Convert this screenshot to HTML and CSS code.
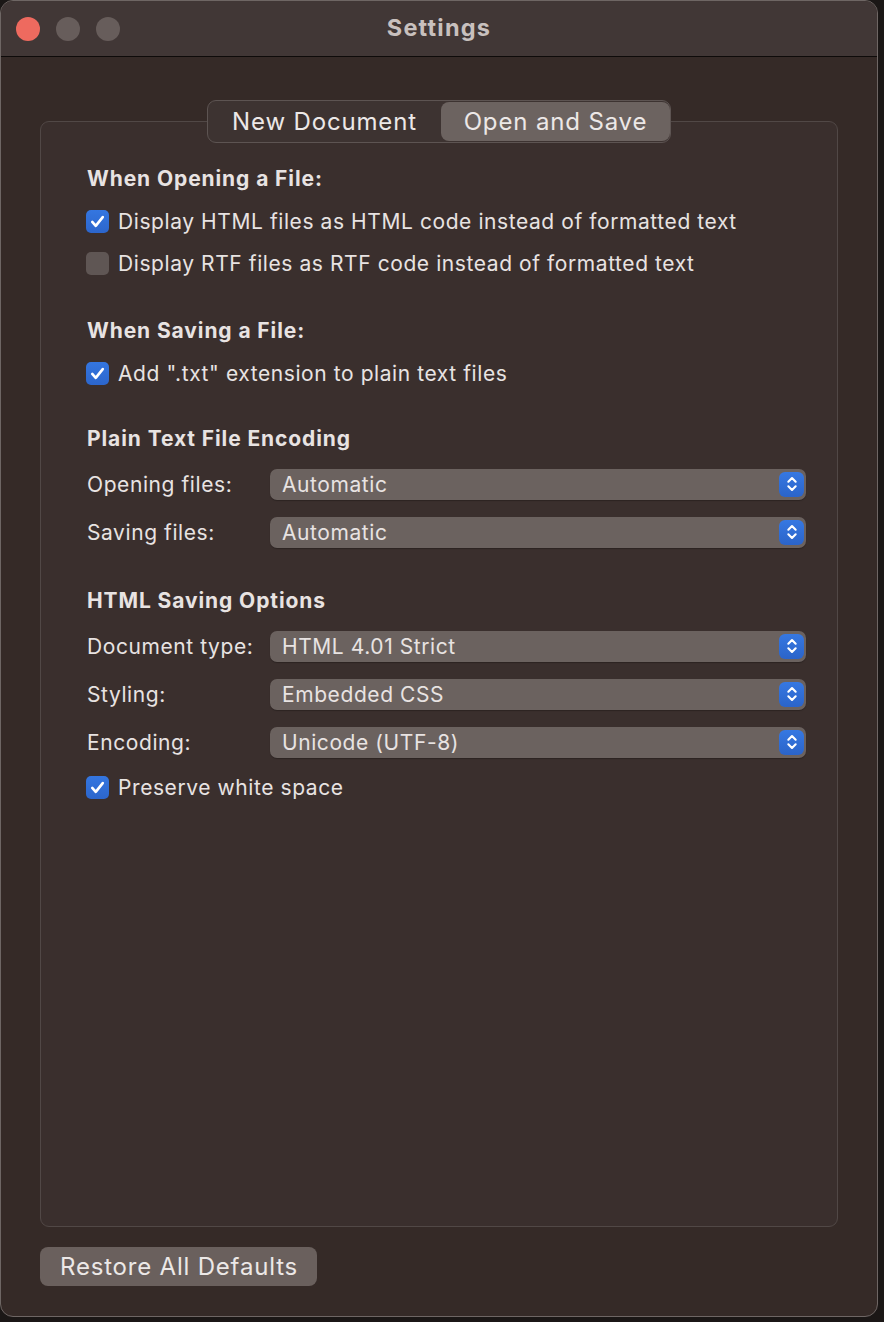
FILE: index.html
```html
<!DOCTYPE html>
<html>
<head>
<meta charset="utf-8">
<link rel="stylesheet" href="styles.css">
</head>
<body>
<div class="window">
  <div class="titlebar">
    <div class="lights">
      <span class="light red"></span>
      <span class="light gray"></span>
      <span class="light gray"></span>
    </div>
    <div class="title">Settings</div>
  </div>
  <div class="content">
    <div class="tabs">
      <div class="tab">New Document</div>
      <div class="tab selected">Open and Save</div>
    </div>
    <div class="box">
      <div class="heading">When Opening a File:</div>
      <div class="cbrow"><span class="cb on"><svg viewBox="0 0 24 24"><path d="M6 12.5l4 4.5 8-10" /></svg></span><span>Display HTML files as HTML code instead of formatted text</span></div>
      <div class="cbrow"><span class="cb"></span><span>Display RTF files as RTF code instead of formatted text</span></div>

      <div class="heading section">When Saving a File:</div>
      <div class="cbrow"><span class="cb on"><svg viewBox="0 0 24 24"><path d="M6 12.5l4 4.5 8-10" /></svg></span><span>Add ".txt" extension to plain text files</span></div>

      <div class="heading section tight">Plain Text File Encoding</div>
      <div class="selrow"><span class="label">Opening files:</span><div class="select"><span>Automatic</span><span class="stepper"><svg viewBox="0 0 24 24"><path d="M8 9.5l4-4 4 4M8 14.5l4 4 4-4"/></svg></span></div></div>
      <div class="selrow"><span class="label">Saving files:</span><div class="select"><span>Automatic</span><span class="stepper"><svg viewBox="0 0 24 24"><path d="M8 9.5l4-4 4 4M8 14.5l4 4 4-4"/></svg></span></div></div>

      <div class="heading section tight">HTML Saving Options</div>
      <div class="selrow"><span class="label">Document type:</span><div class="select"><span>HTML 4.01 Strict</span><span class="stepper"><svg viewBox="0 0 24 24"><path d="M8 9.5l4-4 4 4M8 14.5l4 4 4-4"/></svg></span></div></div>
      <div class="selrow"><span class="label">Styling:</span><div class="select"><span>Embedded CSS</span><span class="stepper"><svg viewBox="0 0 24 24"><path d="M8 9.5l4-4 4 4M8 14.5l4 4 4-4"/></svg></span></div></div>
      <div class="selrow"><span class="label">Encoding:</span><div class="select"><span>Unicode (UTF-8)</span><span class="stepper"><svg viewBox="0 0 24 24"><path d="M8 9.5l4-4 4 4M8 14.5l4 4 4-4"/></svg></span></div></div>
      <div class="cbrow"><span class="cb on"><svg viewBox="0 0 24 24"><path d="M6 12.5l4 4.5 8-10" /></svg></span><span>Preserve white space</span></div>
    </div>
    <div class="footer">
      <button class="restore">Restore All Defaults</button>
    </div>
  </div>
</div>
</body>
</html>
```

FILE: styles.css
```css
html, body {
  margin: 0;
  padding: 0;
}
body {
  width: 884px;
  height: 1322px;
  background: #1b1716;
  font-family: Inter, "Open Sans", "Liberation Sans", sans-serif;
  color: #e8e3e2;
  overflow: hidden;
}
.window {
  width: 876px;
  height: 1315px;
  border: 1px solid #6e6664;
  border-radius: 13px;
  background: #352a27;
  overflow: hidden;
  display: flex;
  flex-direction: column;
}
.titlebar {
  height: 55px;
  background: #413736;
  border-bottom: 1px solid #0e0b0a;
  display: flex;
  align-items: center;
  position: relative;
}
.lights {
  display: flex;
  gap: 16px;
  padding-left: 15px;
}
.light {
  width: 24px;
  height: 24px;
  border-radius: 50%;
  display: block;
}
.light.red { background: #ee6a5f; }
.light.gray { background: #675d5b; }
.title {
  position: absolute;
  left: 0;
  right: 0;
  top: 0;
  bottom: 3px;
  display: flex;
  align-items: center;
  justify-content: center;
  font-weight: 700;
  font-size: 23.5px;
  letter-spacing: 1.2px;
  color: #c8c0be;
}
.content {
  flex: 1;
  display: flex;
  flex-direction: column;
  padding: 0 39px 0 39px;
}
.tabs {
  margin: 43px auto 0;
  display: flex;
  width: 462px;
  height: 41px;
  border: 1px solid #5d5452;
  border-radius: 9px;
  background: #3d3331;
  position: relative;
  z-index: 1;
  box-sizing: content-box;
}
.tab {
  display: flex;
  align-items: center;
  justify-content: center;
  font-size: 24px;
  letter-spacing: 0.85px;
  color: #ece8e7;
}
.tab:first-child { width: 233px; }
.tab.selected {
  flex: 1;
  background: #6c6360;
  border-radius: 8px;
  margin: 1px 0;
}
.box {
  margin-top: -22px;
  height: 1070px;
  border: 1px solid #514846;
  border-radius: 9px;
  background: #3a2f2d;
  padding: 34px 31px 0 45px;
}
.heading {
  height: 44px;
  display: flex;
  align-items: center;
  font-weight: 700;
  font-size: 21px;
  letter-spacing: 0.9px;
  padding-left: 1px;
}
.heading.section { margin-top: 24px; }
.heading.section.tight { margin-top: 22px; }
.cbrow {
  height: 42px;
  display: flex;
  align-items: center;
  font-size: 21px;
  letter-spacing: 0.58px;
  gap: 9px;
}
.cb {
  width: 23px;
  height: 23px;
  border-radius: 5px;
  background: #5f5654;
  display: flex;
  align-items: center;
  justify-content: center;
  flex: none;
}
.cb.on {
  background: linear-gradient(#3476e0, #2c66cc);
}
.cb svg {
  width: 21px;
  height: 21px;
  fill: none;
  stroke: #fff;
  stroke-width: 3;
  stroke-linecap: round;
  stroke-linejoin: round;
}
.selrow {
  height: 48px;
  display: flex;
  align-items: center;
  font-size: 21px;
  letter-spacing: 0.58px;
  padding-left: 1px;
}
.label {
  width: 183px;
  flex: none;
}
.select {
  flex: 1;
  height: 31px;
  background: #6b625f;
  border-radius: 7px;
  display: flex;
  align-items: center;
  justify-content: space-between;
  padding: 0 2px 0 12px;
  box-shadow: 0 1px 1px rgba(0,0,0,0.25);
}
.stepper {
  width: 25px;
  height: 25px;
  border-radius: 6px;
  background: linear-gradient(#3678e2, #2b64c9);
  display: flex;
  align-items: center;
  justify-content: center;
}
.stepper svg {
  width: 22px;
  height: 22px;
  fill: none;
  stroke: #fff;
  stroke-width: 2.3;
  stroke-linecap: round;
  stroke-linejoin: round;
}
.footer {
  margin-top: 20px;
}
.restore {
  width: 277px;
  height: 39px;
  border: none;
  border-radius: 8px;
  background: #6a605d;
  color: #ece8e7;
  font-family: inherit;
  font-size: 24px;
  letter-spacing: 0.8px;
  text-align: left;
  padding: 0 0 0 20px;
  cursor: default;
}
```
